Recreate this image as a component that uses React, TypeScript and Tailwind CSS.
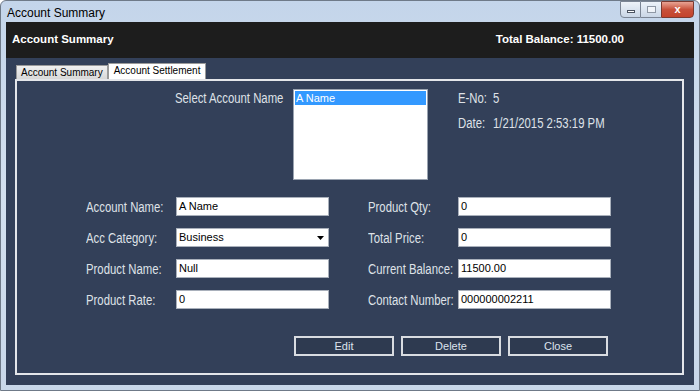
import React from 'react';

// WinForms label text renders narrow; squeeze Arial metrics horizontally
function Label({ children, className = '' }: { children: React.ReactNode; className?: string }) {
  return (
    <div className={`text-[14px] text-[#dfe2e8] leading-none whitespace-nowrap ${className}`}>
      <span className="inline-block origin-left scale-x-[0.81]">{children}</span>
    </div>
  );
}

function Field({ label, value, combo }: { label: string; value: string; combo?: boolean }) {
  return (
    <div className="flex items-center h-[19px]">
      <Label className="w-[90px]">{label}</Label>
      <div className="w-[153px] h-[19px] bg-white border border-[#a9b0bb] flex items-center justify-between pl-[2px] pr-[4px] text-[11px] text-black">
        <span>{value}</span>
        {combo && (
          <svg width="7" height="4" viewBox="0 0 7 4">
            <path d="M0 0 L7 0 L3.5 4 Z" fill="#000" />
          </svg>
        )}
      </div>
    </div>
  );
}

function WinButton({ label }: { label: string }) {
  return (
    <button className="w-[100px] h-[20px] border-2 border-[#d9dce1] bg-[#2e3a50] text-[11px] text-[#dde3ee] leading-none">
      {label}
    </button>
  );
}

export default function App() {
  return (
    <div className="w-[700px] h-[391px] bg-gradient-to-b from-[#c4d5ea] via-[#d3e0ef] to-[#c9d8ea] border border-[#6f7a88] rounded-t-[6px] flex flex-col font-['Liberation_Sans',Arial,sans-serif] overflow-hidden">
      {/* Title bar */}
      <div className="h-[21px] flex items-start justify-between">
        <div className="pl-[6px] pt-[3px] text-[12px] text-black">Account Summary</div>
        <div className="flex mr-[5px]">
          <div className="w-[21px] h-[17px] border border-[#7b8594] rounded-bl-[4px] bg-gradient-to-b from-[#eef3f9] to-[#c9d6e6] flex items-center justify-center">
            <div className="w-[8px] h-[3px] border border-[#4b5361] bg-white mt-[4px]" />
          </div>
          <div className="w-[20px] h-[17px] border-y border-[#7b8594] bg-gradient-to-b from-[#eef3f9] to-[#c9d6e6] flex items-center justify-center">
            <div className="w-[9px] h-[7px] border border-[#8f98a5] bg-white/60" />
          </div>
          <div className="w-[33px] h-[17px] border border-[#7b3a30] rounded-br-[4px] bg-gradient-to-b from-[#e8a394] via-[#c7503a] to-[#c4432b] flex items-center justify-center text-white text-[11px] font-bold leading-none">
            x
          </div>
        </div>
      </div>

      {/* Client area */}
      <div className="mx-[5px] h-[363px] bg-[#334059] flex flex-col">
        <div className="h-[36px] bg-[#1d1d1d] flex items-center justify-between pl-[6px] pr-[70px] text-white font-bold text-[11.5px]">
          <span>Account Summary</span>
          <span>Total Balance: 11500.00</span>
        </div>

        <div className="pl-[9px] pr-[10px] pt-[5px]">
          {/* Tabs */}
          <div className="flex items-end h-[16px] pl-[1px]">
            <div className="h-[14px] px-[4px] border border-b-0 border-[#9a9a9a] bg-gradient-to-b from-[#f0f0f0] to-[#d8d8d8] text-[10px] text-black leading-[13px] whitespace-nowrap">
              Account Summary
            </div>
            <div className="h-[16px] px-[5px] border border-b-0 border-[#9a9a9a] bg-white text-[10px] text-black leading-[14px] whitespace-nowrap">
              Account Settlement
            </div>
          </div>

          {/* Tab page */}
          <div className="h-[296px] border-2 border-[#e4e6ea] flex flex-col">
            <div className="flex pt-[8px]">
              <Label className="ml-[158px] w-[118px] pt-[2px]">Select Account Name</Label>
              <div className="w-[135px] h-[91px] bg-white border border-[#9aa3b0] p-[1px]">
                <div className="h-[14px] bg-[#3399ff] text-white text-[11px] leading-[14px] pl-[1px]">A Name</div>
              </div>
              <div className="ml-[30px] pt-[2px] flex flex-col gap-[11px]">
                <div className="flex">
                  <Label className="w-[35px]">E-No:</Label>
                  <Label>5</Label>
                </div>
                <div className="flex">
                  <Label className="w-[35px]">Date:</Label>
                  <Label>1/21/2015 2:53:19 PM</Label>
                </div>
              </div>
            </div>

            <div className="mt-[17px] flex">
              <div className="ml-[69px] flex flex-col gap-[12px]">
                <Field label="Account Name:" value="A Name" />
                <Field label="Acc Category:" value="Business" combo />
                <Field label="Product Name:" value="Null" />
                <Field label="Product Rate:" value="0" />
              </div>
              <div className="ml-[39px] flex flex-col gap-[12px]">
                <Field label="Product Qty:" value="0" />
                <Field label="Total Price:" value="0" />
                <Field label="Current Balance:" value="11500.00" />
                <Field label="Contact Number:" value="000000002211" />
              </div>
            </div>

            <div className="mt-[27px] ml-[277px] flex gap-[7px]">
              <WinButton label="Edit" />
              <WinButton label="Delete" />
              <WinButton label="Close" />
            </div>
          </div>
        </div>
      </div>
    </div>
  );
}
